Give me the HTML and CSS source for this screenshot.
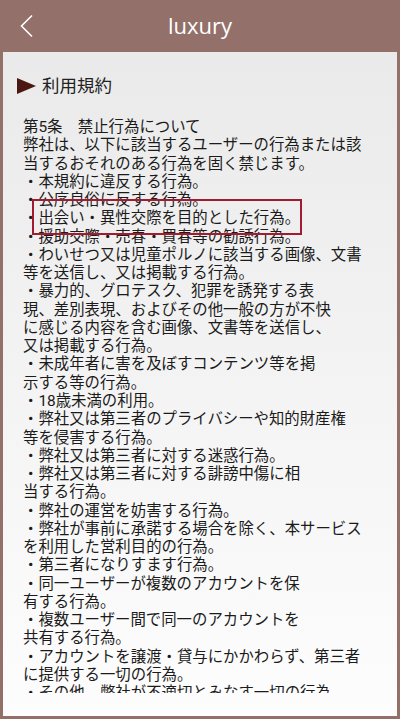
FILE: index.html
```html
<!DOCTYPE html>
<html lang="ja">
<head>
<meta charset="utf-8">
<title>luxury</title>
<link rel="stylesheet" href="styles.css">
</head>
<body>
<div class="frame">
  <header class="bar">
    <button class="back" aria-label="戻る">
      <svg width="16" height="24" viewBox="0 0 16 24"><path d="M13 1.5 L2.5 12 L13 22.5" fill="none" stroke="#ffffff" stroke-width="1.6"/></svg>
    </button>
    <h1 class="bar-title">luxury</h1>
  </header>
  <main class="panel">
    <h2 class="section-title"><span class="tri"></span>利用規約</h2>
    <div class="terms">
      <p class="terms-text">第5条　禁止行為について<br>弊社は、以下に該当するユーザーの行為または該<br>当するおそれのある行為を固く禁じます。<br>・本規約に違反する行為。<br>・公序良俗に反する行為。<br>・出会い・異性交際を目的とした行為。<br>・援助交際・売春・買春等の勧誘行為。<br>・わいせつ又は児童ポルノに該当する画像、文書<br>等を送信し、又は掲載する行為。<br>・暴力的、グロテスク、犯罪を誘発する表<br>現、差別表現、およびその他一般の方が不快<br>に感じる内容を含む画像、文書等を送信し、<br>又は掲載する行為。<br>・未成年者に害を及ぼすコンテンツ等を掲<br>示する等の行為。<br>・18歳未満の利用。<br>・弊社又は第三者のプライバシーや知的財産権<br>等を侵害する行為。<br>・弊社又は第三者に対する迷惑行為。<br>・弊社又は第三者に対する誹謗中傷に相<br>当する行為。<br>・弊社の運営を妨害する行為。<br>・弊社が事前に承諾する場合を除く、本サービス<br>を利用した営利目的の行為。<br>・第三者になりすます行為。<br>・同一ユーザーが複数のアカウントを保<br>有する行為。<br>・複数ユーザー間で同一のアカウントを<br>共有する行為。<br>・アカウントを譲渡・貸与にかかわらず、第三者<br>に提供する一切の行為。<br>・その他、弊社が不適切とみなす一切の行為。</p>
      <span class="highlight"></span>
    </div>
  </main>
</div>
</body>
</html>
```
FILE: styles.css
```css
html, body {
  margin: 0;
  padding: 0;
}
body {
  width: 400px;
  height: 719px;
  overflow: hidden;
  font-family: Roboto, "Noto Sans CJK JP", sans-serif;
}
.frame {
  box-sizing: border-box;
  width: 400px;
  height: 719px;
  background: #94706a;
  padding: 0 3px 3px;
  display: flex;
  flex-direction: column;
}
.bar {
  height: 52px;
  flex: none;
  position: relative;
  display: flex;
  align-items: center;
  justify-content: center;
}
.back {
  position: absolute;
  left: 16px;
  top: 14px;
  width: 18px;
  height: 24px;
  padding: 0;
  border: 0;
  background: none;
  display: flex;
}
.bar-title {
  margin: 0;
  font-family: "Open Sans", sans-serif;
  font-weight: 400;
  font-size: 22px;
  color: #ffffff;
  line-height: 1;
  padding-bottom: 2px;
}
.panel {
  flex: 1;
  background: linear-gradient(#eaeaea, #fdfdfd);
  padding: 0 0 0 14px;
  display: flex;
  flex-direction: column;
  min-height: 0;
}
.section-title {
  margin: 24px 0 0;
  display: flex;
  align-items: center;
  gap: 6px;
  height: 20px;
  font-weight: 400;
  font-size: 17.5px;
  color: #222222;
  line-height: 20px;
}
.tri {
  width: 0;
  height: 0;
  border-style: solid;
  border-width: 8px 0 8px 19px;
  border-color: transparent transparent transparent #4a1810;
}
.terms {
  position: relative;
  margin: 22px 0 0 6px;
  height: 575px;
  overflow: hidden;
}
.terms-text {
  margin: 0;
  font-size: 15.4px;
  line-height: 18.27px;
  color: #1b1b1b;
  white-space: nowrap;
}
.highlight {
  position: absolute;
  left: 9px;
  top: 81px;
  width: 266px;
  height: 32px;
  border: 2px solid #a21c30;
}
```
